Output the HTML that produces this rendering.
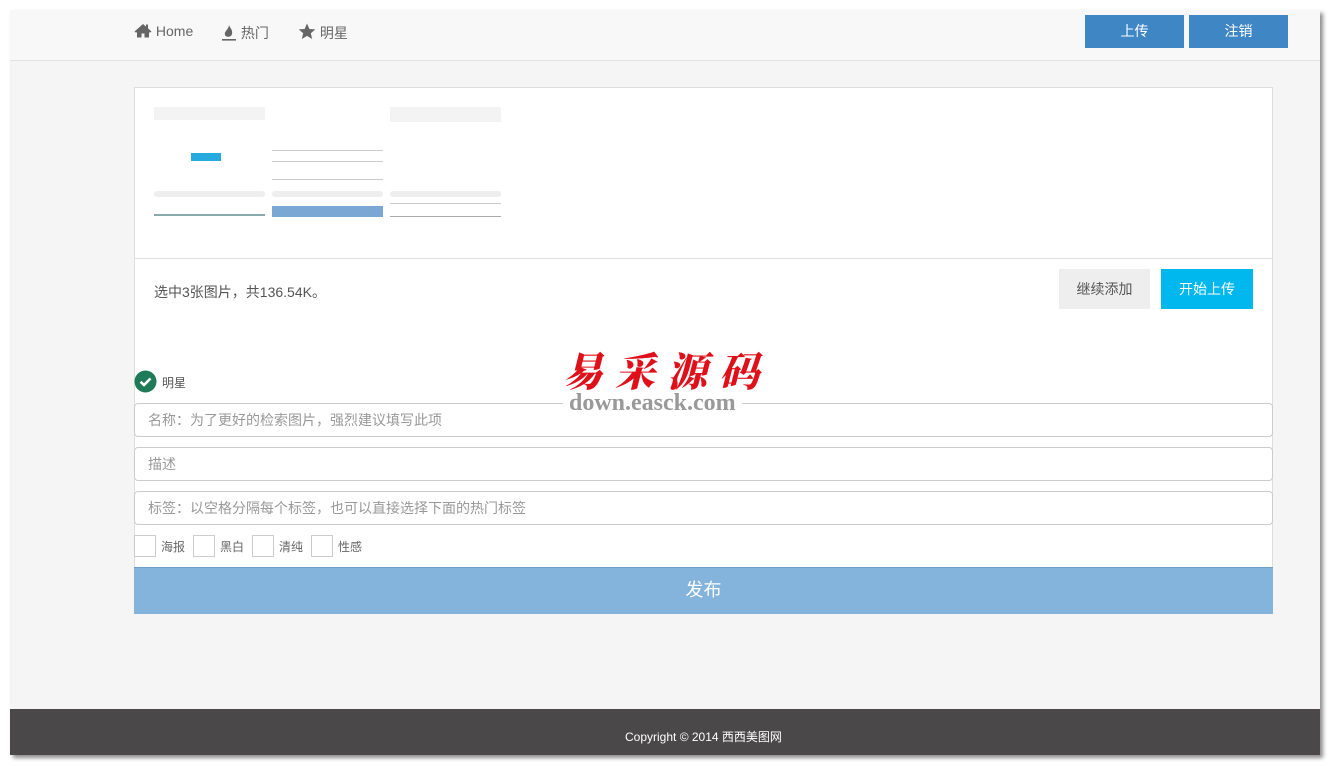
<!DOCTYPE html>
<html><head><meta charset="utf-8">
<style>
*{margin:0;padding:0;box-sizing:border-box}
body{width:1331px;height:766px;background:#fff;position:relative;overflow:hidden;font-family:"Liberation Sans","Noto Sans CJK SC",sans-serif;color:#555}
.frame{position:absolute;left:10px;top:10px;width:1310px;height:745px;background:#f5f5f5;box-shadow:3px 3px 4px rgba(0,0,0,.45)}
.abs{position:absolute}
.nav{left:0;top:0;width:1310px;height:51px;background:#f8f8f8;border-bottom:1px solid #e3e3e3}
.navi{font-size:14px;color:#666;top:13px}
.btn{background:#3f86c5;color:#fff;font-size:14px;text-align:center;line-height:33px;height:33px;width:99px;top:5px}
.panel{left:124px;top:77px;width:1139px;height:527px;background:#fff;border:1px solid #ddd}
.thumb{width:111px;height:112px}
.inp{left:-1px;width:1139px;height:34px;border:1px solid #ccc;border-radius:4px;background:#fff;font-size:14px;color:#999;padding-left:13px;line-height:32px}
.cb{width:22px;height:22px;border:1px solid #ccc;background:#fff;top:447px}
.cbl{font-size:12px;color:#666;top:450px}
</style></head><body>
<div class="frame">
 <div class="abs nav">
  <div class="abs navi" style="left:124px"><svg width="18" height="15" viewBox="0 0 18 15" style="vertical-align:-2px"><path d="M9 1L0.5 8.5 2 9.8 3 9V14.5H7.5V10.5H10.5V14.5H15V9L16 9.8 17.5 8.5 14 5.4V1.5H12V3.6Z" fill="#666"/></svg> Home</div>
  <div class="abs navi" style="left:211px"><svg width="16" height="17" viewBox="0 0 16 17" style="vertical-align:-3px"><path d="M8 1C9 4 12 6 11 10 10.5 12 9 12.8 7 12.8 5 12.8 3.8 11.5 3.8 9.8 3.8 7 7.5 5.5 8 1Z" fill="#666"/><rect x="1" y="15" width="14" height="1.6" fill="#666"/></svg> 热门</div>
  <div class="abs navi" style="left:288px"><svg width="18" height="17" viewBox="0 0 18 17" style="vertical-align:-2px"><path d="M9 0.5 11.4 6 17.3 6.4 12.8 10.2 14.2 16 9 12.9 3.8 16 5.2 10.2 0.7 6.4 6.6 6Z" fill="#666"/></svg> 明星</div>
  <div class="abs btn" style="left:1075px">上传</div>
  <div class="abs btn" style="left:1179px">注销</div>
 </div>
 <div class="abs panel">
  <div class="abs thumb" style="left:19px;top:19px">
   <div class="abs" style="left:0;top:0;width:111px;height:13px;background:#f3f3f3"></div>
   <div class="abs" style="left:37px;top:46px;width:30px;height:8px;background:#26a9de"></div>
   <div class="abs" style="left:0;top:84px;width:111px;height:6px;background:#eee;border-radius:3px"></div>
   <div class="abs" style="left:0;top:107px;width:111px;height:2px;background:#8aa"></div>
  </div>
  <div class="abs thumb" style="left:137px;top:19px">
   <div class="abs" style="left:0;top:43px;width:111px;height:1px;background:#ccc"></div>
   <div class="abs" style="left:0;top:54px;width:111px;height:1px;background:#ccc"></div>
   <div class="abs" style="left:0;top:72px;width:111px;height:1px;background:#ccc"></div>
   <div class="abs" style="left:0;top:84px;width:111px;height:6px;background:#eee;border-radius:3px"></div>
   <div class="abs" style="left:0;top:99px;width:111px;height:11px;background:#7aa7d3"></div>
  </div>
  <div class="abs thumb" style="left:255px;top:19px">
   <div class="abs" style="left:0;top:0;width:111px;height:15px;background:#f3f3f3"></div>
   <div class="abs" style="left:0;top:84px;width:111px;height:6px;background:#eee;border-radius:3px"></div>
   <div class="abs" style="left:0;top:96px;width:111px;height:1px;background:#ccc"></div>
   <div class="abs" style="left:0;top:109px;width:111px;height:1px;background:#aaa"></div>
  </div>
  <div class="abs" style="left:0;top:170px;width:1137px;height:1px;background:#e0e0e0"></div>
  <div class="abs" style="left:19px;top:194px;font-size:14px;color:#555">选中3张图片，共136.54K。</div>
  <div class="abs" style="left:924px;top:181px;width:91px;height:40px;background:#eee;color:#555;font-size:14px;text-align:center;line-height:40px">继续添加</div>
  <div class="abs" style="left:1026px;top:181px;width:92px;height:40px;background:#00b7ee;color:#fff;font-size:14px;text-align:center;line-height:40px">开始上传</div>
  <div class="abs" style="left:-1px;top:282px"><svg width="23" height="23" viewBox="0 0 23 23"><circle cx="11.5" cy="11.5" r="11" fill="#1f7a5a"/><path d="M6.5 11.8 10 15 16.5 8.5" stroke="#fff" stroke-width="2.6" fill="none"/></svg></div>
  <div class="abs" style="left:27px;top:286px;font-size:12px;color:#555">明星</div>
  <div class="abs" style="left:428px;top:253px;font-family:'Noto Serif CJK SC',serif;font-weight:900;font-size:40px;color:#e0101a;letter-spacing:12px;font-style:italic">易采源码</div>
  <div class="abs inp" style="top:315px">名称：为了更好的检索图片，强烈建议填写此项</div>
  <div class="abs" style="left:428px;top:302px;background:#fff;padding:0 6px;font-family:'Liberation Serif',serif;font-weight:bold;font-size:24px;color:#999">down.easck.com</div>
  <div class="abs inp" style="top:359px">描述</div>
  <div class="abs inp" style="top:403px">标签：以空格分隔每个标签，也可以直接选择下面的热门标签</div>
  <div class="abs cb" style="left:-1px"></div><div class="abs cbl" style="left:26px">海报</div>
  <div class="abs cb" style="left:58px"></div><div class="abs cbl" style="left:85px">黑白</div>
  <div class="abs cb" style="left:117px"></div><div class="abs cbl" style="left:144px">清纯</div>
  <div class="abs cb" style="left:176px"></div><div class="abs cbl" style="left:203px">性感</div>
  <div class="abs" style="left:-1px;top:479px;width:1139px;height:47px;background:#84b3dc;border-top:1px solid #6f9fc7;color:#fff;font-size:18px;text-align:center;line-height:44px">发布</div>
 </div>
 <div class="abs" style="left:0;top:699px;width:1310px;height:46px;background:#4a4849;color:#fff;font-size:12px;line-height:56px"><span class="abs" style="left:615px;top:0">Copyright © 2014 西西美图网</span></div>
</div>
</body></html>
